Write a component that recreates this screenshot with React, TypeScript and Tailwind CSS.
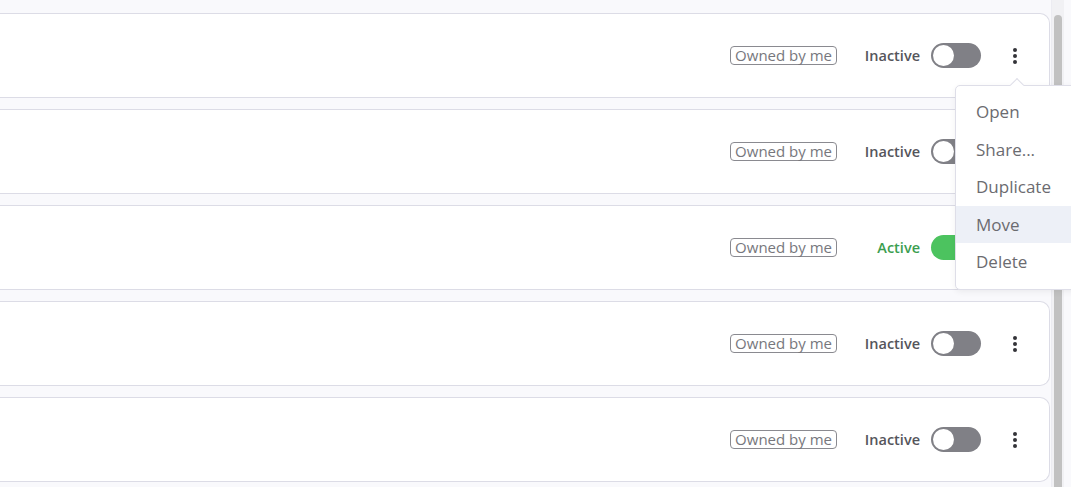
import { useState } from 'react';

type Row = { id: number; active: boolean };

const rows: Row[] = [
  { id: 1, active: false },
  { id: 2, active: false },
  { id: 3, active: true },
  { id: 4, active: false },
  { id: 5, active: false },
];

const menuItems = ['Open', 'Share...', 'Duplicate', 'Move', 'Delete'];

export default function App() {
  const [hovered] = useState('Move');

  return (
    <div
      className="relative flex h-[487px] w-[1071px] overflow-hidden bg-[#f9f9fc]"
      style={{ fontFamily: '"Open Sans", "Noto Sans", sans-serif' }}
    >
      <div className="flex w-[1050px] flex-col gap-[11px] pt-[13px]">
        {rows.map((row) => (
          <Card key={row.id} active={row.active} />
        ))}
      </div>

      <div className="ml-[1px] flex w-[13px] justify-center border-l border-[#ececf2] bg-[#f1f1f4] pt-[15px]">
        <div className="h-full w-[8px] rounded-t-full bg-[#c1c1c1]" />
      </div>

      {/* context menu */}
      <div className="absolute left-[955px] top-[85px] w-[130px] rounded-[5px] border border-[#dedee8] bg-white pt-[7px] pb-[8px] shadow-[0_2px_6px_rgba(0,0,0,0.06)]">
        <div className="absolute -top-[6px] left-[56px] h-[10px] w-[10px] rotate-45 border-l border-t border-[#dedee8] bg-white" />
        {menuItems.map((item) => (
          <div
            key={item}
            className={`flex h-[37.5px] items-center px-[20px] text-[17px] text-[#6b6b70] ${
              item === hovered ? 'bg-[#edf0f7] text-[#4a4a50]' : ''
            }`}
          >
            {item}
          </div>
        ))}
      </div>
    </div>
  );
}

const Card = ({ active }: { active: boolean }) => (
  <div className="flex h-[85px] shrink-0 items-center justify-end rounded-r-[10px] border border-l-0 border-[#dcdce6] bg-white pr-[29px]">
    <span className="rounded-[4px] border border-[#8a8a90] px-[4px] text-[15px] leading-[17px] text-[#77777d]">
      Owned by me
    </span>

    <span
      className={`ml-[25px] w-[58px] text-right text-[14.5px] font-semibold ${
        active ? 'text-[#3b9e50]' : 'text-[#55555b]'
      }`}
    >
      {active ? 'Active' : 'Inactive'}
    </span>

    <Toggle on={active} />

    <button className="ml-[29px] flex h-[24px] w-[10px] flex-col items-center justify-center gap-[2px]">
      <span className="h-[4px] w-[4px] rounded-full bg-[#333338]" />
      <span className="h-[4px] w-[4px] rounded-full bg-[#333338]" />
      <span className="h-[4px] w-[4px] rounded-full bg-[#333338]" />
    </button>
  </div>
);

const Toggle = ({ on }: { on: boolean }) => (
  <div
    className={`ml-[11px] flex h-[25px] w-[50px] items-center rounded-full p-[2px] ${
      on ? 'justify-end bg-[#4cc35f]' : 'justify-start bg-[#808086]'
    }`}
  >
    <div className="h-[21px] w-[21px] rounded-full bg-white" />
  </div>
);
